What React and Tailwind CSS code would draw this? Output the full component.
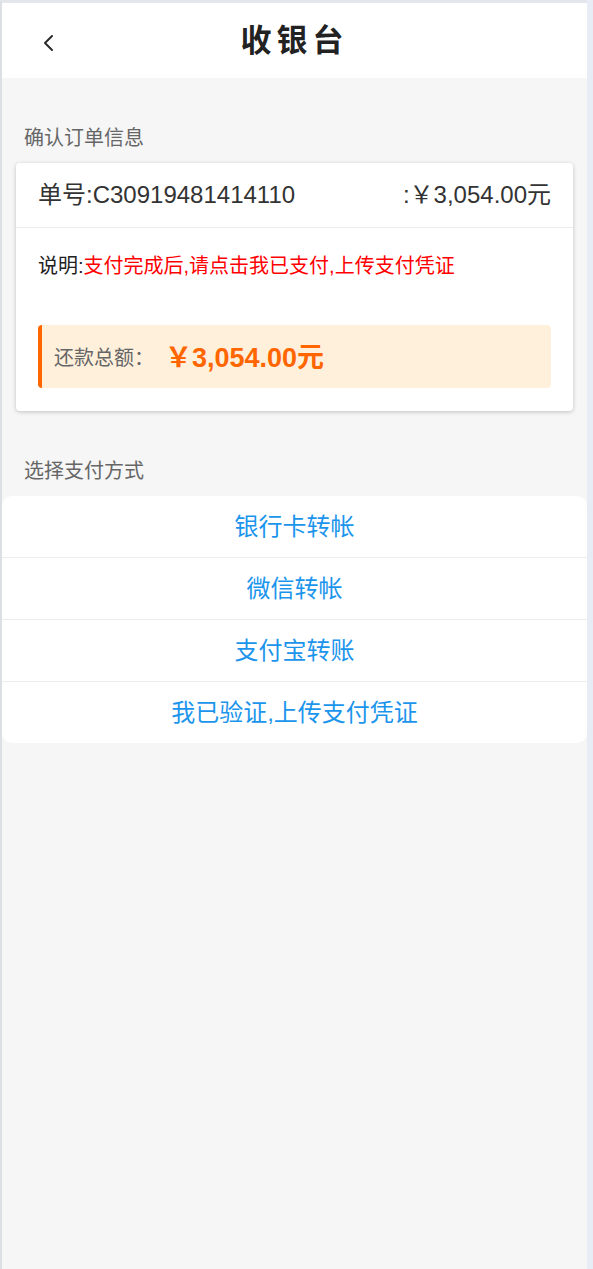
import React from "react";

const payWays = ["银行卡转帐", "微信转帐", "支付宝转账", "我已验证,上传支付凭证"];

const App = () => {
  return (
    <div className="flex min-h-screen w-full bg-[#e8ecf4] font-['Liberation_Sans','Noto_Sans_CJK_SC',sans-serif]">
      {/* Main column */}
      <div className="flex flex-col w-[587px] min-h-[1269px] bg-[#f6f6f6] border-l-2 border-t-[3px] border-l-[#dcdfe4] border-t-[#e3e6eb]">
        {/* Header */}
        <div className="relative flex items-center justify-center h-[75px] bg-white">
          <div className="absolute left-[35px] top-[28px] flex items-center justify-center w-6 h-6">
            <svg width="14" height="18" viewBox="0 0 14 18" fill="none">
              <polyline
                points="10,2 3,9 10,16"
                stroke="#2b2b2b"
                strokeWidth="2"
                strokeLinecap="round"
                strokeLinejoin="round"
              />
            </svg>
          </div>
          <h1 className="text-[31px] font-bold tracking-[5px] text-[#222] leading-none">收银台</h1>
        </div>

        {/* Order section */}
        <div className="pl-[22px] pt-[49px] pb-[14px] text-[20px] leading-[22px] text-[#666]">确认订单信息</div>

        <div className="mx-[14px] bg-white rounded-[4px] shadow-[0_1px_4px_rgba(0,0,0,0.22)]">
          <div className="flex items-center justify-between h-[65px] px-[22px] border-b border-[#ececec] text-[24px] text-[#333]">
            <span>单号:C30919481414110</span>
            <span>:￥3,054.00元</span>
          </div>
          <div className="px-[22px] pt-[26px] pb-[47px] text-[20px] leading-[24px] text-[#222]">
            说明:<span className="text-[#ff0000]">支付完成后,请点击我已支付,上传支付凭证</span>
          </div>
          <div className="px-[22px] pb-[23px]">
            <div className="flex items-center h-[63px] pl-[12px] pt-[3px] bg-[#fff0dc] border-l-4 border-[#ff6600] rounded-[4px]">
              <span className="text-[20px] text-[#666]">还款总额：</span>
              <span className="ml-[11px] text-[27px] font-bold text-[#ff6600]">￥3,054.00元</span>
            </div>
          </div>
        </div>

        {/* Pay methods */}
        <div className="pl-[22px] pt-[49px] pb-[14px] text-[20px] leading-[22px] text-[#666]">选择支付方式</div>

        <div className="bg-white rounded-[10px] overflow-hidden">
          {payWays.map((w, i) => (
            <div
              key={w}
              className={
                i < payWays.length - 1
                  ? "flex items-center justify-center h-[62px] border-b border-[#ededed] text-[24px] text-[#1b95ec]"
                  : "flex items-center justify-center h-[61px] text-[24px] text-[#1b95ec]"
              }
            >
              {w}
            </div>
          ))}
        </div>
      </div>
      <div className="flex-1" />
    </div>
  );
};

export default App;
